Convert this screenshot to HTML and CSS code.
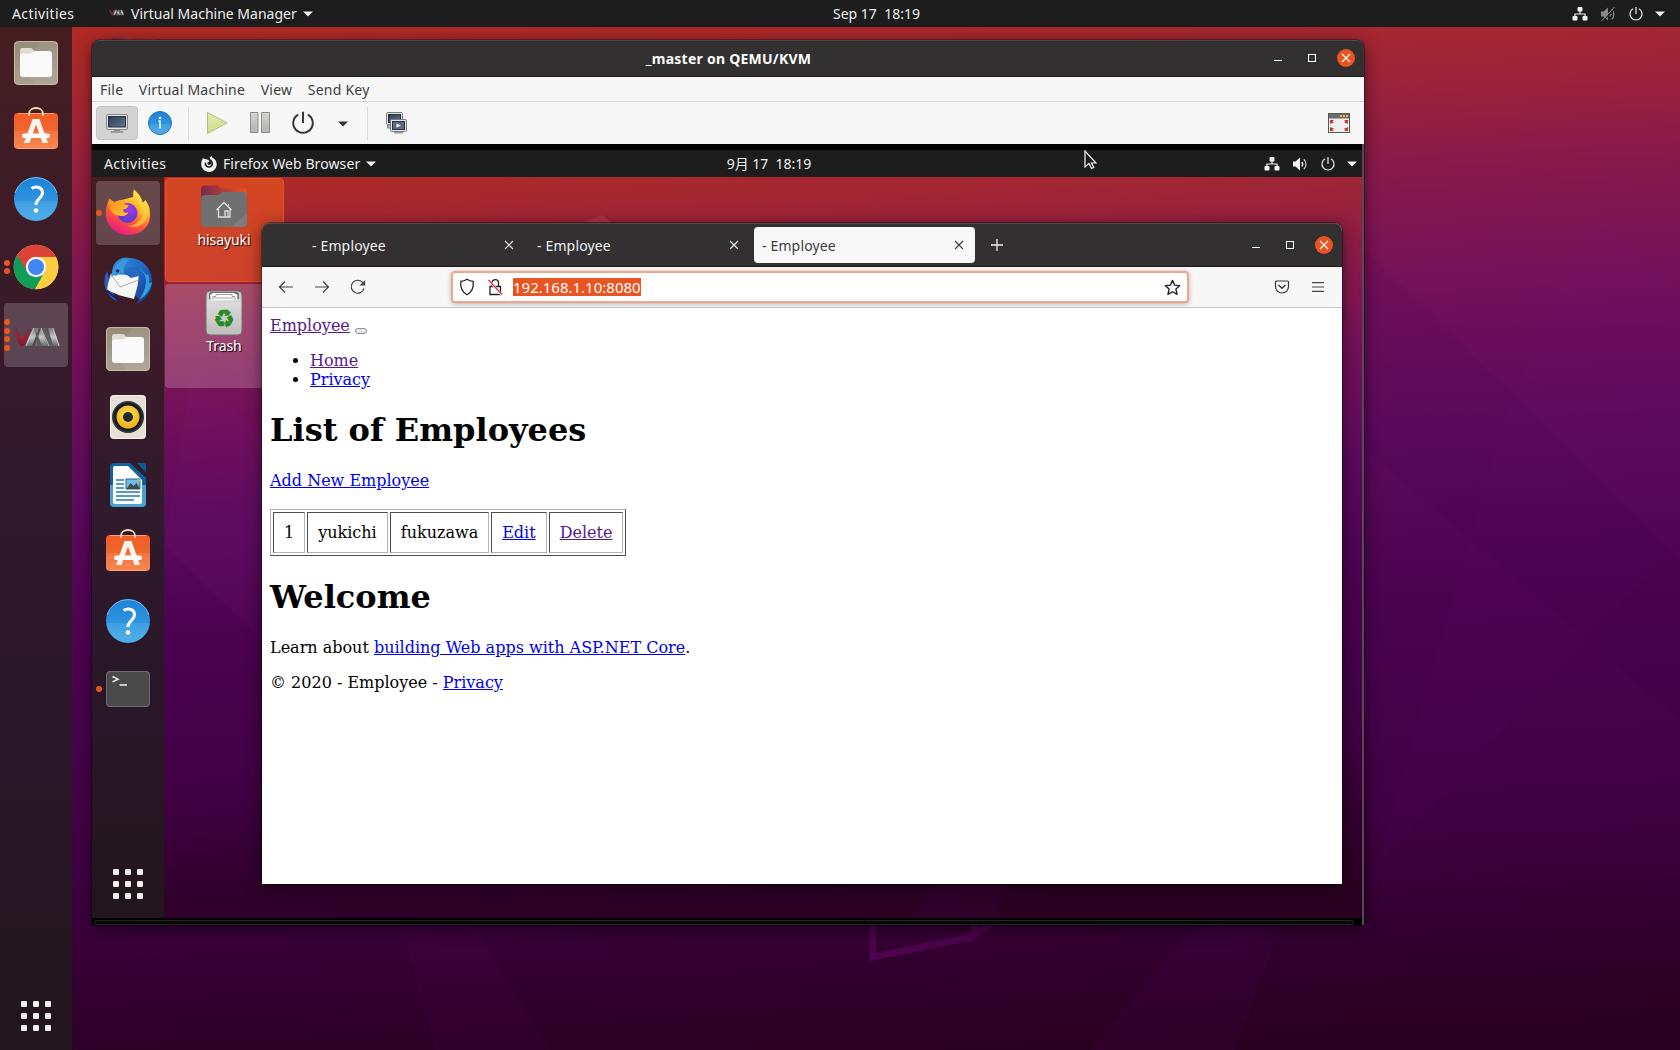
FILE: index.html
```html
<!DOCTYPE html>
<html lang="en">
<head>
<meta charset="utf-8">
<title>_master on QEMU/KVM</title>
<link rel="stylesheet" href="styles.css">
</head>
<body>
<svg class="defs" width="0" height="0">
  <defs>
    <linearGradient id="g-files" x1="0" y1="0" x2="0" y2="1"><stop offset="0" stop-color="#958b77"/><stop offset="1" stop-color="#a9a18e"/></linearGradient>
    <linearGradient id="g-soft" x1="0" y1="0" x2="0" y2="1"><stop offset="0" stop-color="#f45b25"/><stop offset=".5" stop-color="#f0672f"/><stop offset=".5" stop-color="#f3733e"/><stop offset="1" stop-color="#f7874f"/></linearGradient>
    <linearGradient id="g-help" x1="0" y1="0" x2="0" y2="1"><stop offset="0" stop-color="#1d82d6"/><stop offset=".55" stop-color="#2f94df"/><stop offset=".55" stop-color="#3f9fe3"/><stop offset="1" stop-color="#51b0ea"/></linearGradient>
    <linearGradient id="g-fox" x1=".8" y1="0" x2=".3" y2="1"><stop offset="0" stop-color="#fff04a"/><stop offset=".35" stop-color="#ffb52b"/><stop offset=".65" stop-color="#ff5a36"/><stop offset="1" stop-color="#e5128a"/></linearGradient>
    <linearGradient id="g-fox2" x1="0" y1="0" x2="1" y2="1"><stop offset="0" stop-color="#ff8a1f"/><stop offset="1" stop-color="#ffc62e"/></linearGradient>
    <radialGradient id="g-globe" cx=".6" cy=".3" r=".8"><stop offset="0" stop-color="#a238e8"/><stop offset="1" stop-color="#4a3dc4"/></radialGradient>
    <linearGradient id="g-bird" x1="0" y1="0" x2="1" y2="1"><stop offset="0" stop-color="#2f8fd8"/><stop offset=".5" stop-color="#2268c4"/><stop offset="1" stop-color="#1c2d77"/></linearGradient>
    <linearGradient id="g-home" x1="0" y1="0" x2="1" y2="0"><stop offset="0" stop-color="#77284f"/><stop offset="1" stop-color="#e95420"/></linearGradient>
    <linearGradient id="g-bin" x1="0" y1="0" x2="0" y2="1"><stop offset="0" stop-color="#c8c8c8"/><stop offset=".3" stop-color="#dadada"/><stop offset="1" stop-color="#bdbdbd"/></linearGradient>
    <linearGradient id="g-vm" x1="0" y1="0" x2="0" y2="1"><stop offset="0" stop-color="#777"/><stop offset=".5" stop-color="#c4c8c6"/><stop offset="1" stop-color="#66696a"/></linearGradient>
    <linearGradient id="g-vmr" x1="0" y1="0" x2="0" y2="1"><stop offset="0" stop-color="#4a4548"/><stop offset=".5" stop-color="#a02038"/><stop offset="1" stop-color="#7c1a2c"/></linearGradient>
    <linearGradient id="g-screen" x1="0" y1="0" x2="1" y2="1"><stop offset="0" stop-color="#2c3a50"/><stop offset="1" stop-color="#65788c"/></linearGradient>
    <linearGradient id="g-gray" x1="0" y1="0" x2="0" y2="1"><stop offset="0" stop-color="#d4d5d2"/><stop offset="1" stop-color="#b3b5b0"/></linearGradient>
    <linearGradient id="g-play" x1="0" y1="0" x2="0" y2="1"><stop offset="0" stop-color="#e3eeb0"/><stop offset="1" stop-color="#cbdc8c"/></linearGradient>
    <radialGradient id="g-cone" cx=".5" cy=".4" r=".6"><stop offset="0" stop-color="#ffe566"/><stop offset="1" stop-color="#e8ae0d"/></radialGradient>

    <symbol id="files" viewBox="0 0 48 48"><rect x="2" y="2" width="44" height="44" rx="4.500" fill="url(#g-files)"/><path d="M30 2h11.500a4.500 4.500 0 0 1 4.500 4.500V46H24L8 26z" fill="#fff" opacity=".08"/><rect x="2.500" y="2.500" width="43" height="43" rx="4" fill="none" stroke="#c2bba9"/><path d="M8 14v-3a2 2 0 0 1 2-2h9.500l4 4v7H8z" fill="#e0dccf"/><path d="M8 17.500a3 3 0 0 1 3-3h7c2 0 3.500-2.500 5.500-2.500H37a3 3 0 0 1 3 3v20a3 3 0 0 1-3 3H11a3 3 0 0 1-3-3z" fill="#fbfafa"/></symbol>
    <symbol id="software" viewBox="0 0 48 48"><rect x="2" y="6" width="44" height="36" rx="4" fill="url(#g-soft)"/><path d="M6 6.500h36M6 41.500h36" stroke="#fba27a"/><path d="M17 9V7c0-8 14-8 14 0v2" fill="none" stroke="#f5dfb5" stroke-width="1.800"/><path d="M20.500 12h7l8.500 24h-5.500L24 17.500 17.500 36H12z" fill="#fdf4ee"/><rect x="10" y="26.500" width="28" height="4.500" rx="2.200" fill="#fff"/></symbol>
    <symbol id="help" viewBox="0 0 48 48"><circle cx="24" cy="24" r="22" fill="url(#g-help)"/><path d="M3 18a22 22 0 0 1 42 0" fill="none" stroke="#71b8ec" stroke-width="1"/><path d="M19.500 13.500c5-3 11-1 11 4 0 6-6.700 6.500-6.700 12.500" fill="none" stroke="#fff" stroke-width="3"/><circle cx="24" cy="35.500" r="2.300" fill="#fff"/></symbol>
    <symbol id="chrome" viewBox="0 0 48 48"><circle cx="24" cy="24" r="22.300" fill="#ffcd40"/><path d="M24 24 4.700 12.800A22.300 22.300 0 0 0 23 46.300L33 28z" fill="#0f9d58"/><path d="M24 14h19.900A22.300 22.300 0 0 0 5 12.500L15 28l9-4z" fill="#db4437"/><path d="M24 46.300 34 28 24 24v-10h20a22.300 22.300 0 0 1-20 32.300z" fill="#ffcd40"/><circle cx="24" cy="24" r="10.200" fill="#f5f5f5"/><circle cx="24" cy="24" r="8" fill="#4285f4"/></symbol>
    <symbol id="vmm" viewBox="0 0 48 18"><path d="M0 0h5l5 11 6-10h4l-8 17H8z" fill="url(#g-vmr)"/><path d="M13 18 21 0h6l-7 18zM23 18l6-18 7 18zM36 0h5l7 18h-7z" fill="url(#g-vm)"/><path d="M23 0l7 18h-5zM30 0h4l8 18h-5z" fill="#5b5e5f"/><path d="M22 0 14 18M29 0l8 18M41 0l6 18" stroke="#d0d2d1" stroke-width=".8"/></symbol>
    <symbol id="firefox" viewBox="0 0 48 48"><path d="M5.500 9.500c1 2.500 2.500 3.300 5 3.700 2-1.400 4-2 7-2.200L29 8c.5-3 0-5 1-7.500C35 5 37.500 8.500 38 13.500c2.200-.4 2.500-1.500 3-2.500 6 6 6 16 4 22-3.500 9-12 13-21 13C12 46 3 37 1.800 26.500 1.300 20 3 15 5.500 9.500z" fill="url(#g-fox)"/><circle cx="23.500" cy="24" r="10" fill="url(#g-globe)"/><path d="M5.500 9.500c3.500 3 6 4 9 4 4.500 0 6 2.500 10 2.500 0 3-3 4-5 4.500-1 3 2 3.500 5 3-2 3-5 4-8 3.500C10 26.500 4 23 5.500 9.500z" fill="url(#g-fox2)"/><path d="M29.500 5c2.500 4 5 6 6.500 11 1.700 5-1 10-1 10s3-1.500 4.500-6c-.5 10-7 17-16 17 14 4.500 23-7 21-19-1-3-2-5-3-7-.5 1.300-1 2-2.600 2.500C38 9 35 5 30 .5z" fill="#ffdf40" opacity=".6"/></symbol>
    <symbol id="thunderbird" viewBox="0 0 48 48"><path d="M3 14C-1 22-.5 31 5 38c2 3 5 5 8 6-3-4-4-6-4-9z" fill="#2862bd"/><path d="M12 5c5-5 10-5 14-4 14 1 22 11 22 24 0 11-7 19-16 22 2-2 3-3 3-5L8 22C7 14 9 8 12 5z" fill="url(#g-bird)"/><path d="M26 9c7 0 15 5 16 14 0 7-3 14-7 20 7-4 12-11 13-18-2 2-2 1-3 0 1-3 0-6-1-8-1 1-2 1-3 0-1-3-6-7-15-8z" fill="#2aa0e3"/><path d="m6.700 17 28 1.500-1 9.500-3.700 14L16 38.500 3 33l1-6z" fill="#f7f6f6"/><path d="m6.700 17 9.300 13 18.500-7" fill="none" stroke="#a9b1b9" stroke-width="1"/><path d="M7 20c1-8 6-14 12-18 4-1 6 0 6 1-4 3-6 8-5 14-3-1-6 0-8 2-2-1-4 0-5 1z" fill="#3897dd"/><path d="M20 16c3-6 10-7 14-5l1 8-8 2z" fill="#2769c2"/><circle cx="13.500" cy="14" r="1.700" fill="#1b3767"/><path d="M3 33c4 6 8 8 13 10" fill="none" stroke="#1b1f69" stroke-width="2"/></symbol>
    <symbol id="rhythm" viewBox="0 0 48 48"><rect x="6" y="2" width="36" height="44" rx="4" fill="#e6e1d7"/><rect x="6.500" y="2.500" width="35" height="43" rx="4" fill="none" stroke="#f4f1ea"/><circle cx="24" cy="24" r="16" fill="#2d3336"/><circle cx="24" cy="24" r="14" fill="#171a1c"/><circle cx="24" cy="24" r="11.500" fill="url(#g-cone)"/><circle cx="24" cy="24" r="5" fill="#23282a"/></symbol>
    <symbol id="writer" viewBox="0 0 48 48"><path d="M10 2h16l16 15v25a4 4 0 0 1-4 4H10a4 4 0 0 1-4-4V6a4 4 0 0 1 4-4z" fill="#0e639c"/><path d="M6 24h36v18a4 4 0 0 1-4 4H10a4 4 0 0 1-4-4z" fill="#47a1d2"/><path d="M11 5h13l14 14v22a2 2 0 0 1-2 2H11a2 2 0 0 1-2-2V7a2 2 0 0 1 2-2z" fill="#fff"/><path d="M33 2h7a2 2 0 0 1 2 2v8z" fill="#0d5a8e"/><path d="M12 19h8m-8 4h8m-8 4h8m-8 4h24m-24 4h24m-24 4h18" stroke="#1e7ab8" stroke-width="1.700"/><path d="M22 18h14v10H22z" fill="#6dbbe9" stroke="#1e6496"/><path d="m22.500 28 4-6 3 3 3-3 3.500 6z" fill="#474747"/><path d="M33 18.500h3v3z" fill="#f6ba28"/></symbol>
    <symbol id="terminal" viewBox="0 0 48 48"><rect x="2" y="6" width="44" height="36" rx="4" fill="#4a4a4a"/><rect x="2.500" y="6.500" width="43" height="35" rx="3.500" fill="none" stroke="#6d6d6b"/><path d="m8.500 11.500 5.500 2.700-5.500 2.700M15.500 20h7.500" fill="none" stroke="#f2f2f2" stroke-width="1.500"/></symbol>
    <symbol id="grid" viewBox="0 0 30 30"><g fill="#f2f0ee"><rect width="6" height="6" rx="1.300"/><rect x="12" width="6" height="6" rx="1.300"/><rect x="24" width="6" height="6" rx="1.300"/><rect y="12" width="6" height="6" rx="1.300"/><rect x="12" y="12" width="6" height="6" rx="1.300"/><rect x="24" y="12" width="6" height="6" rx="1.300"/><rect y="24" width="6" height="6" rx="1.300"/><rect x="12" y="24" width="6" height="6" rx="1.300"/><rect x="24" y="24" width="6" height="6" rx="1.300"/></g></symbol>

    <symbol id="net" viewBox="0 0 16 16"><path d="M8 4v4M3 11V8h10v3" fill="none" stroke="#f2f2f2" stroke-width="1.200"/><rect x="5.500" y="1" width="5" height="4.500" rx="1" fill="#f2f2f2"/><rect x=".5" y="10" width="5" height="4.500" rx="1" fill="#f2f2f2"/><rect x="10.500" y="10" width="5" height="4.500" rx="1" fill="#f2f2f2"/></symbol>
    <symbol id="vol" viewBox="0 0 16 16"><path d="M1 5.500h2.500L8 1.500v13L3.500 10.500H1z" fill="#f2f2f2"/><path d="M9.800 6a3.500 3.500 0 0 1 0 4.500" fill="none" stroke="#f2f2f2" stroke-width="1.400"/><path d="M11.800 3.200a7 7 0 0 1 0 10" fill="none" stroke="#c4c4c4" stroke-width="1.300"/></symbol>
    <symbol id="mute" viewBox="0 0 16 16"><g opacity=".5"><path d="M1 5.500h2.500L8 1.500v13L3.500 10.500H1z" fill="#f2f2f2"/><path d="M9.800 6a3.500 3.500 0 0 1 0 4.500M11.800 3.200a7 7 0 0 1 0 10" fill="none" stroke="#f2f2f2" stroke-width="1.300"/></g><path d="M2.500 15.500 15.500 2" stroke="#1d1d1d" stroke-width="1.200"/><path d="M1.500 15 14.500 1" stroke="#8a8a8a" stroke-width="1"/></symbol>
    <symbol id="power" viewBox="0 0 16 16"><path d="M5 2.800a6 6 0 1 0 6 0M8 1v7" fill="none" stroke="currentColor" stroke-width="1.200"/></symbol>
    <symbol id="caret" viewBox="0 0 10 6"><path d="M0 .5h10L5 5.500z" fill="currentColor"/></symbol>
    <symbol id="fox-mono" viewBox="0 0 16 16"><path d="M2 2c.7.8 1.500 1 2.500 1L7.500 4l1 1.500-2 1C6 8.500 8 9.500 9.500 8.500 12 6.500 9.500 4.500 8.500 1.500L10.500 0l.7 1.500C14 3 16 5.500 15.700 8.700 15.200 13 12 16 8 16S.2 12.700.2 8.300C.2 5.500 1 4 2 2z" fill="#f2f2f2"/><path d="M9.500 4c2.500 2.500 2.500 6-1.200 7C5.500 11 4 9 4.500 6.700" fill="none" stroke="#1d1d1d" stroke-width="1.600"/></symbol>

    <symbol id="monitor" viewBox="0 0 24 24"><rect x="1.500" y="3.500" width="21" height="15" rx="1.500" fill="#e5e6e3" stroke="#858782"/><rect x="3.500" y="5.500" width="17" height="10.500" fill="url(#g-screen)" stroke="#26324a"/><path d="M9 18.500h6v2.500H9z" fill="#8d8f8a"/><rect x="5.500" y="20" width="13" height="2" rx="1" fill="#9a9c97"/></symbol>
    <symbol id="monitors" viewBox="0 0 24 24"><rect x="2.500" y="1.500" width="16" height="12" rx="1" fill="#e5e6e3" stroke="#7a7c78"/><rect x="4.500" y="3.500" width="12" height="8" fill="url(#g-screen)" stroke="#26324a"/><rect x="3.500" y="14" width="6" height="3" fill="#b2b4b0" stroke="#8c8e89"/><rect x="6.500" y="8.500" width="16" height="12" rx="1" fill="#e5e6e3" stroke="#7a7c78"/><rect x="8.500" y="10.500" width="12" height="8" fill="#5c6d82" stroke="#26324a"/><path d="m12.500 12.500 4.500 2-4.500 2z" fill="#fff"/><rect x="10" y="21" width="9" height="1.500" fill="#999b96"/></symbol>
    <symbol id="info" viewBox="0 0 24 24"><circle cx="12" cy="12" r="11.500" fill="url(#g-help)" stroke="#2572ae"/><path d="M10.500 10H12v7.500" fill="none" stroke="#fff" stroke-width="1.500"/><circle cx="12" cy="7" r="1.200" fill="#fff"/></symbol>
    <symbol id="play" viewBox="0 0 24 24"><path d="M2.500 1.500v21L22 12z" fill="url(#g-play)" stroke="#a9c178"/></symbol>
    <symbol id="pause" viewBox="0 0 24 24"><path d="M2.500 1.500h7.500v20h-7.500zM13.500 1.500h8v20h-8z" fill="url(#g-gray)" stroke="#8c8e8a"/></symbol>
    <symbol id="fullscreen" viewBox="0 0 24 22"><rect x="1.500" y="1.500" width="21" height="19" fill="#eeeeec" stroke="#555753"/><path d="M2 2h20v4.500H2z" fill="#6a6c68"/><path d="M13 3h2v2h-2zm3 0h2v2h-2zm3 0h2v2h-2z" fill="#e3b450"/><path d="M3 8h4L5.500 9.500 7 11H5L3 12zm18 0h-4l1.500 1.500L17 11h2l2 1zM3 19h4l-1.500-1.500L7 16H5l-2-1zm18 0h-4l1.500-1.500L17 16h2l2-1z" fill="#c4343c"/></symbol>

    <symbol id="close" viewBox="0 0 10 10"><path d="m1 1 8 8M9 1 1 9" stroke="currentColor" stroke-width="1.100"/></symbol>
    <symbol id="plus" viewBox="0 0 14 14"><path d="M7 1v12M1 7h12" stroke="currentColor" stroke-width="1.300"/></symbol>
    <symbol id="back" viewBox="0 0 16 16"><path d="M15 8H1.500M7 2.500 1.500 8 7 13.500" fill="none" stroke="#444" stroke-width="1.200"/></symbol>
    <symbol id="fwd" viewBox="0 0 16 16"><path d="M1 8h13.500M9 2.500 14.500 8 9 13.500" fill="none" stroke="#444" stroke-width="1.200"/></symbol>
    <symbol id="reload" viewBox="0 0 16 16"><path d="M14 9.500A6.500 6.500 0 1 1 12.500 3.300l1.500 2" fill="none" stroke="#444" stroke-width="1.200"/><path d="M15.200 1v5.500H9.500z" fill="#444"/></symbol>
    <symbol id="shield" viewBox="0 0 16 18"><path d="M8 1.200c2 1.400 4 2 6.200 2.200C14.800 9 13 14 8 16.700 3 14 1.200 9 1.800 3.400 4 3.200 6 2.600 8 1.200z" fill="none" stroke="#222" stroke-width="1.300"/></symbol>
    <symbol id="lock" viewBox="0 0 16 18"><path d="M3 8.500h10.500v8H3zM5 8.500V5c0-4.500 6.500-4.500 6.500 0v3.500" fill="none" stroke="#222" stroke-width="1.300"/><path d="M2 2.500 15 17" stroke="#fff" stroke-width="2.600"/><path d="M1.500 2 15 16.500" stroke="#e22850" stroke-width="1.300"/></symbol>
    <symbol id="star" viewBox="0 0 16 16"><path d="M8 1.300l2 4.500 4.800.5-3.600 3.200 1.100 5L8 12l-4.300 2.500 1.100-5L1.200 6.300 6 5.800z" fill="none" stroke="#222" stroke-width="1.300" stroke-linejoin="round"/></symbol>
    <symbol id="pocket" viewBox="0 0 16 16"><path d="M2.500 2h11a1 1 0 0 1 1 1v4.500a6.500 6.500 0 0 1-13 0V3a1 1 0 0 1 1-1z" fill="none" stroke="#333" stroke-width="1.200"/><path d="M4.500 6 8 9.300 11.500 6" fill="none" stroke="#333" stroke-width="1.400"/></symbol>
    <symbol id="menu" viewBox="0 0 12 10"><path d="M0 .7h12M0 5h12M0 9.300h12" stroke="#444" stroke-width="1.200"/></symbol>

    <symbol id="home" viewBox="0 0 48 44"><path d="M1 5a3.500 3.500 0 0 1 3.500-3.500H17c2 0 3 3 5 3h21.500A3.500 3.500 0 0 1 47 8v16H1z" fill="url(#g-home)"/><path d="M1 15a4 4 0 0 1 4-4h13c2.500 0 3-3 6-3h19a4 4 0 0 1 4 4v27a4 4 0 0 1-4 4H5a4 4 0 0 1-4-4z" fill="#707070"/><path d="M47 29v10a4 4 0 0 1-4 4H31z" fill="#7d7d7d"/><path d="M16.500 26 24 18.500l7.500 7.500M18.500 24.500V33H30v-8.500M25 33v-6h3v6M28.500 21.500V20" fill="none" stroke="#dedede" stroke-width="1.300"/></symbol>
    <symbol id="trash" viewBox="0 0 38 46"><rect x="1" y="1" width="36" height="44" rx="4" fill="url(#g-bin)" stroke="#6c6c6c"/><path d="M4 9V5a3 3 0 0 1 3-3h24a3 3 0 0 1 3 3v4z" fill="#6f6f6f"/><path d="M6 10.500 5 5l3-2h21l3.500 2-.5 5z" fill="#fff"/><path d="M8 10V6.500h3V4.500h16v2h3V10M9 8h20" fill="none" stroke="#8a8a8a" stroke-width=".8"/></symbol>
  </defs>
</svg>

<div class="desktop">
  <svg class="wallpaper" viewBox="0 0 1680 1050" preserveAspectRatio="none">
    <path d="M1590 205 1680 290V540L1375 870 1500 430z" fill="#8a2090" opacity=".04"/>
    <path d="M1365 250 1680 560V720L1365 450z" fill="#30003c" opacity=".05"/>
    <path d="M1195 924h87L1235 1050H1090z" fill="#70108a" opacity=".07"/>
    <path d="M400 924h75l75 126H435z" fill="#70108a" opacity=".05"/>
    <path d="m872 900 1 57 99-20 70-50M973 937l4-25" fill="none" stroke="#4b034c" stroke-width="7"/>
  </svg>
  <div class="peek"><svg class="peek-icon"><use href="#home"/></svg></div>

  <header class="panel">
    <span class="activities">Activities</span>
    <span class="app"><svg class="ic-vm"><use href="#vmm"/></svg><span>Virtual Machine Manager</span><svg class="caret"><use href="#caret"/></svg></span>
    <time class="clock">Sep 17&nbsp; 18:19</time>
    <span class="status"><svg><use href="#net"/></svg><svg><use href="#mute"/></svg><svg><use href="#power"/></svg><svg class="caret"><use href="#caret"/></svg></span>
  </header>
  <nav class="dock">
    <a class="tile"><svg><use href="#files"/></svg></a>
    <a class="tile"><svg><use href="#software"/></svg></a>
    <a class="tile"><svg><use href="#help"/></svg></a>
    <a class="tile"><span class="dots"><i></i><i></i></span><svg><use href="#chrome"/></svg></a>
    <a class="tile active"><span class="dots"><i></i><i></i><i></i><i></i></span><svg class="vm-logo"><use href="#vmm"/></svg></a>
    <a class="apps"><svg><use href="#grid"/></svg></a>
  </nav>

  <section class="window vm">
    <div class="titlebar">
      <h2 class="title">_master on QEMU/KVM</h2>
      <div class="controls"><i class="min"></i><i class="max"></i><span class="x"><svg><use href="#close"/></svg></span></div>
    </div>
    <div class="menubar"><span>File</span><span>Virtual Machine</span><span>View</span><span>Send Key</span></div>
    <div class="toolbar">
      <span class="tool pressed"><svg><use href="#monitor"/></svg></span>
      <span class="tool"><svg><use href="#info"/></svg></span>
      <i class="sep"></i>
      <span class="tool"><svg><use href="#play"/></svg></span>
      <span class="tool"><svg><use href="#pause"/></svg></span>
      <span class="tool"><svg class="big-power"><use href="#power"/></svg></span>
      <span class="tool drop"><svg class="caret"><use href="#caret"/></svg></span>
      <i class="sep"></i>
      <span class="tool"><svg><use href="#monitors"/></svg></span>
      <span class="tool last"><svg><use href="#fullscreen"/></svg></span>
    </div>

    <div class="guest">
      <svg class="wallpaper" viewBox="0 0 1270 768" preserveAspectRatio="none">
        <path d="m490 73 20-8 22 18h-35z" fill="#c44a60" opacity=".35"/>
        <path d="M72 395 180 500V300L100 220z" fill="#8a2090" opacity=".08"/>
        <path d="M870 700h50l-15 68H820z" fill="#70108a" opacity=".07"/>
      </svg>
      <header class="panel">
        <span class="activities">Activities</span>
        <span class="app"><svg class="ic-fox"><use href="#fox-mono"/></svg><span class="app-name">Firefox Web Browser</span><svg class="caret"><use href="#caret"/></svg></span>
        <time class="clock">9月 17&nbsp; 18:19</time>
        <span class="status"><svg><use href="#net"/></svg><svg><use href="#vol"/></svg><svg><use href="#power"/></svg><svg class="caret"><use href="#caret"/></svg></span>
      </header>
      <nav class="dock">
        <a class="tile active"><span class="dots"><i></i></span><svg><use href="#firefox"/></svg></a>
        <a class="tile"><svg><use href="#thunderbird"/></svg></a>
        <a class="tile"><svg><use href="#files"/></svg></a>
        <a class="tile"><svg><use href="#rhythm"/></svg></a>
        <a class="tile"><svg><use href="#writer"/></svg></a>
        <a class="tile"><svg><use href="#software"/></svg></a>
        <a class="tile"><svg><use href="#help"/></svg></a>
        <a class="tile"><span class="dots"><i></i></span><svg><use href="#terminal"/></svg></a>
        <a class="apps"><svg><use href="#grid"/></svg></a>
      </nav>
      <div class="shortcuts">
        <div class="shortcut selected"><svg class="folder"><use href="#home"/></svg><span>hisayuki</span></div>
        <div class="shortcut hovered"><div class="bin"><svg><use href="#trash"/></svg><b>♻</b></div><span>Trash</span></div>
      </div>

      <section class="window browser">
        <div class="tabstrip">
          <div class="tabs">
            <div class="tab"><span>- Employee</span><svg><use href="#close"/></svg></div>
            <div class="tab"><span>- Employee</span><svg><use href="#close"/></svg></div>
            <div class="tab current"><span>- Employee</span><svg><use href="#close"/></svg></div>
            <svg class="newtab"><use href="#plus"/></svg>
          </div>
          <div class="controls"><i class="min"></i><i class="max"></i><span class="x"><svg><use href="#close"/></svg></span></div>
        </div>
        <div class="navbar">
          <svg class="nav"><use href="#back"/></svg><svg class="nav"><use href="#fwd"/></svg><svg class="nav"><use href="#reload"/></svg>
          <div class="urlbar"><svg class="tall"><use href="#shield"/></svg><svg class="tall"><use href="#lock"/></svg><span class="url">192.168.1.10:8080</span><svg class="star"><use href="#star"/></svg></div>
          <svg class="pocket"><use href="#pocket"/></svg><svg class="burger"><use href="#menu"/></svg>
        </div>
        <main class="page">
          <div class="brand"><a class="visited">Employee</a> <button class="toggler"></button></div>
          <ul><li><a class="visited">Home</a></li><li><a>Privacy</a></li></ul>
          <h1>List of Employees</h1>
          <p class="add"><a>Add New Employee</a></p>
          <table><tr><td>1</td><td>yukichi</td><td>fukuzawa</td><td><a>Edit</a></td><td><a class="visited">Delete</a></td></tr></table>
          <h1>Welcome</h1>
          <p>Learn about <a>building Web apps with ASP.NET Core</a>.</p>
          <p>© 2020 - Employee - <a>Privacy</a></p>
        </main>
      </section>
    </div>
    <div class="hscroll"><i></i></div>
    <div class="vscroll"></div>
    <svg class="cursor" viewBox="0 0 13 20"><path d="M1 1v16l4-3.500 2.500 5 2.300-1L7.500 13H12z" fill="#1d1d1d" stroke="#f4f4f4" stroke-width="1.200"/></svg>
  </section>
</div>
</body>
</html>
```
FILE: styles.css
```css
* { box-sizing: border-box; }
body { margin: 0; overflow: hidden; font: 14px/20px "Noto Sans", "Noto Sans CJK JP", sans-serif; }
svg { display: block; flex: none; }
.defs { position: absolute; }

.desktop, .guest {
  position: relative;
  overflow: hidden;
  background: linear-gradient(177deg, #b22c22 2%, #a32632 10%, #8b1b48 20%, #741159 31%, #5c0a5c 44%, #4b0350 59%, #400143 77%, #330030 88%, #2a0021 97%, #280020 100%);
}
.desktop { width: 1680px; height: 1050px; display: grid; grid-template: 27px 1fr / 72px 1fr; }
.wallpaper { position: absolute; inset: 0; width: 100%; height: 100%; }
.peek { position: absolute; left: 111px; top: 35px; }
.peek-icon { width: 48px; height: 44px; opacity: .7; }

/* top panel */
.panel {
  grid-column: 1 / 3;
  position: relative;
  display: flex;
  align-items: center;
  padding: 0 15px 0 12px;
  background: #1d1d1d;
  color: #eee;
}
.activities { letter-spacing: .4px; width: 97px; }
.app { display: flex; align-items: center; }
.ic-vm { width: 15px; height: 7px; margin-right: 7px; position: relative; top: -1px; }
.ic-fox { width: 16px; height: 16px; margin-right: 6px; }
.app-name { letter-spacing: .1px; }
.caret { width: 10px; height: 6px; margin-left: 6px; }
.clock { position: absolute; left: 80px; right: 7px; text-align: center; }
.status { display: flex; align-items: center; margin-left: auto; color: #eee; }
.status svg { width: 16px; height: 16px; margin-right: 12px; }
.status svg.caret { width: 10px; height: 6px; margin: 0 0 0 -1px; }

/* dock */
.dock {
  position: relative;
  display: flex;
  flex-direction: column;
  gap: 4px;
  padding: 4px 4px 19px;
  background: linear-gradient(#451e20, #3e1c26 15%, #301a2c 45%, #2a1729 65%, #24161f 90%, #22151b);
}
.tile { position: relative; display: flex; align-items: center; justify-content: center; width: 64px; height: 64px; border-radius: 4px; }
.tile svg { width: 48px; height: 48px; }
.tile svg.vm-logo { width: 48px; height: 18px; position: relative; top: 2px; }
.tile.active { background: rgba(255, 255, 255, .19); }
.dots { position: absolute; left: 0; top: 0; bottom: 0; display: flex; flex-direction: column; justify-content: center; gap: 2.700px; }
.dots i { width: 6px; height: 6px; border-radius: 50%; background: #e95420; }
.apps { margin: auto auto 0; }
.apps svg { width: 30px; height: 30px; }

/* windows */
.window { position: absolute; display: flex; flex-direction: column; border-radius: 8px 8px 0 0; box-shadow: 0 0 0 1px rgba(0, 0, 0, .3), 0 3px 16px rgba(0, 0, 0, .55); }
.vm { left: 92px; top: 40px; width: 1272px; height: 885px; background: #000; }
.titlebar, .tabstrip {
  position: relative;
  display: flex;
  align-items: center;
  background: #323030;
  border-bottom: 1px solid #1b1a1a;
  border-radius: 8px 8px 0 0;
  box-shadow: inset 0 1px #4a4848;
}
.titlebar { height: 37px; padding-right: 9px; }
.title { flex: 1; margin: 0; padding: 2px 0 0 91px; text-align: center; font: bold 14px/20px "Noto Sans", sans-serif; letter-spacing: .25px; color: #fff; }
.controls { display: flex; align-items: center; margin-left: auto; }
.min { width: 8px; height: 1px; background: #fff; margin: 5px 26px 0 0; }
.max { width: 8px; height: 8px; border: 1px solid #fff; margin-right: 21px; }
.x { display: grid; place-items: center; width: 18px; height: 18px; border-radius: 50%; background: #e95420; color: #fff; }
.x svg { width: 10px; height: 10px; }
.menubar { display: flex; gap: 15.500px; height: 25px; padding: 3px 8px; background: #f7f7f7; border-bottom: 1px solid #d8d8d8; color: #3d3d3d; letter-spacing: .24px; }
.toolbar { display: flex; align-items: center; height: 42px; padding: 0 4px; background: #f7f7f7; color: #333; }
.tool { display: grid; place-items: center; width: 43px; height: 34px; }
.tool svg { width: 24px; height: 24px; }
.tool.pressed { width: 42px; background: #d3d3d3; border: 1px solid #c3c3c3; border-radius: 4px; }
.tool svg.big-power { width: 26px; height: 26px; }
.tool svg.big-power use { stroke-width: 1; }
.tool.drop { width: 37px; }
.tool svg.caret { width: 10px; height: 6px; margin: 1px 0 0; }
.sep { width: 1px; height: 33px; background: #dcdcdc; margin: 0 6px 0 7px; }
.drop + .sep { margin: 0 6px 0 6px; }
.tool.last { margin-left: auto; width: 42px; }

/* guest display */
.guest { width: 1270px; height: 768px; margin-top: 6px; display: grid; grid-template: 27px 1fr / 72px 1fr; flex: none; }
.guest .panel { padding-right: 5px; }
.guest .clock { left: 100px; right: 16px; top: 4px; }
.hscroll { display: flex; height: 7px; padding: 2px 10px 0 2px; background: #000; }
.hscroll i { flex: 1; border: 1px solid #262626; border-radius: 3px; background: #080808; }
.vscroll { position: absolute; right: 0; top: 104px; bottom: 0; width: 2px; background: rgba(110, 90, 105, .8); }
.cursor { position: absolute; left: 992px; top: 110px; width: 13px; height: 20px; }

.shortcuts { position: relative; display: flex; flex-direction: column; gap: 2px; padding: 1px; }
.shortcut { display: flex; flex-direction: column; align-items: center; width: 119px; height: 104px; padding: 6px 1px 0 0; border-radius: 4px; color: #fff; text-shadow: 1px 1px 1px #000; letter-spacing: -.1px; }
.shortcut.selected { background: rgba(233, 84, 32, .65); border: 1px solid #e95420; padding-top: 5px; }
.shortcut.hovered { background: rgba(255, 255, 255, .2); }
.folder { width: 48px; height: 44px; margin-bottom: 2px; }
.bin { position: relative; }
.bin svg { width: 38px; height: 46px; }
.bin b { position: absolute; inset: 17px 0 auto; text-align: center; font: 24px/24px "DejaVu Sans", sans-serif; color: #27891f; text-shadow: none; letter-spacing: 0; -webkit-text-stroke: .6px #27891f; }

/* browser */
.browser { left: 170px; top: 73px; width: 1080px; height: 661px; background: #fff; }
.tabstrip { height: 44px; padding: 4px 9px 4px 42px; }
.tabs { display: flex; align-items: center; gap: 4px; }
.tab { display: flex; align-items: center; justify-content: space-between; width: 221px; height: 36px; padding: 0 11px 0 8px; border-radius: 4px; color: #f0f0f0; letter-spacing: .15px; }
.tab span { padding-top: 2px; }
.tab svg { width: 10px; height: 10px; }
.tab.current { background: #f8f8f8; color: #3d3d3d; }
.newtab { width: 14px; height: 14px; margin-left: 11px; color: #eee; }
.navbar { display: flex; align-items: center; height: 41px; padding: 0 18px 0 16px; background: #f7f7f7; border-bottom: 1px solid #c3c3c3; }
.nav { width: 16px; height: 16px; margin-right: 20px; }
.urlbar { display: flex; align-items: center; width: 738px; height: 32px; margin-left: 65px; padding: 0 6px; background: #fff; border: 2px solid #f4a58a; border-radius: 4px; box-shadow: 0 1px 4px rgba(0, 0, 0, .3); }
.tall { width: 16px; height: 18px; margin-right: 12px; }
.tall + .tall { margin-right: 10px; }
.url { background: #e95420; color: #fff; font-size: 15px; line-height: 18px; }
.star { width: 17px; height: 17px; margin-left: auto; }
.pocket { width: 16px; height: 16px; margin-left: auto; }
.burger { width: 12px; height: 10px; margin-left: 22px; }

.page { flex: 1; padding: 8px; background: #fff; color: #000; font: 16px/19px "DejaVu Serif", serif; }
.page a { color: #00e; text-decoration: underline; }
.page a.visited { color: #551a8b; }
.toggler { width: 12px; height: 6px; padding: 0; border: 1px solid #8f8f9d; border-radius: 3px; background: #e9e9ed; vertical-align: -2px; }
.page ul { margin: 16px 0; padding-left: 40px; }
.page h1 { margin: 22px 0; font-size: 32px; line-height: 38px; }
.page p { margin: 16px 0; }
.page .add { margin-bottom: 19px; }
.page table { border: 1px solid; border-color: #b2b2b2 #4d4d4d #4d4d4d #b2b2b2; border-spacing: 2px; }
.page td { padding: 10px; border: 1px solid; border-color: #4d4d4d #b2b2b2 #b2b2b2 #4d4d4d; }
```
